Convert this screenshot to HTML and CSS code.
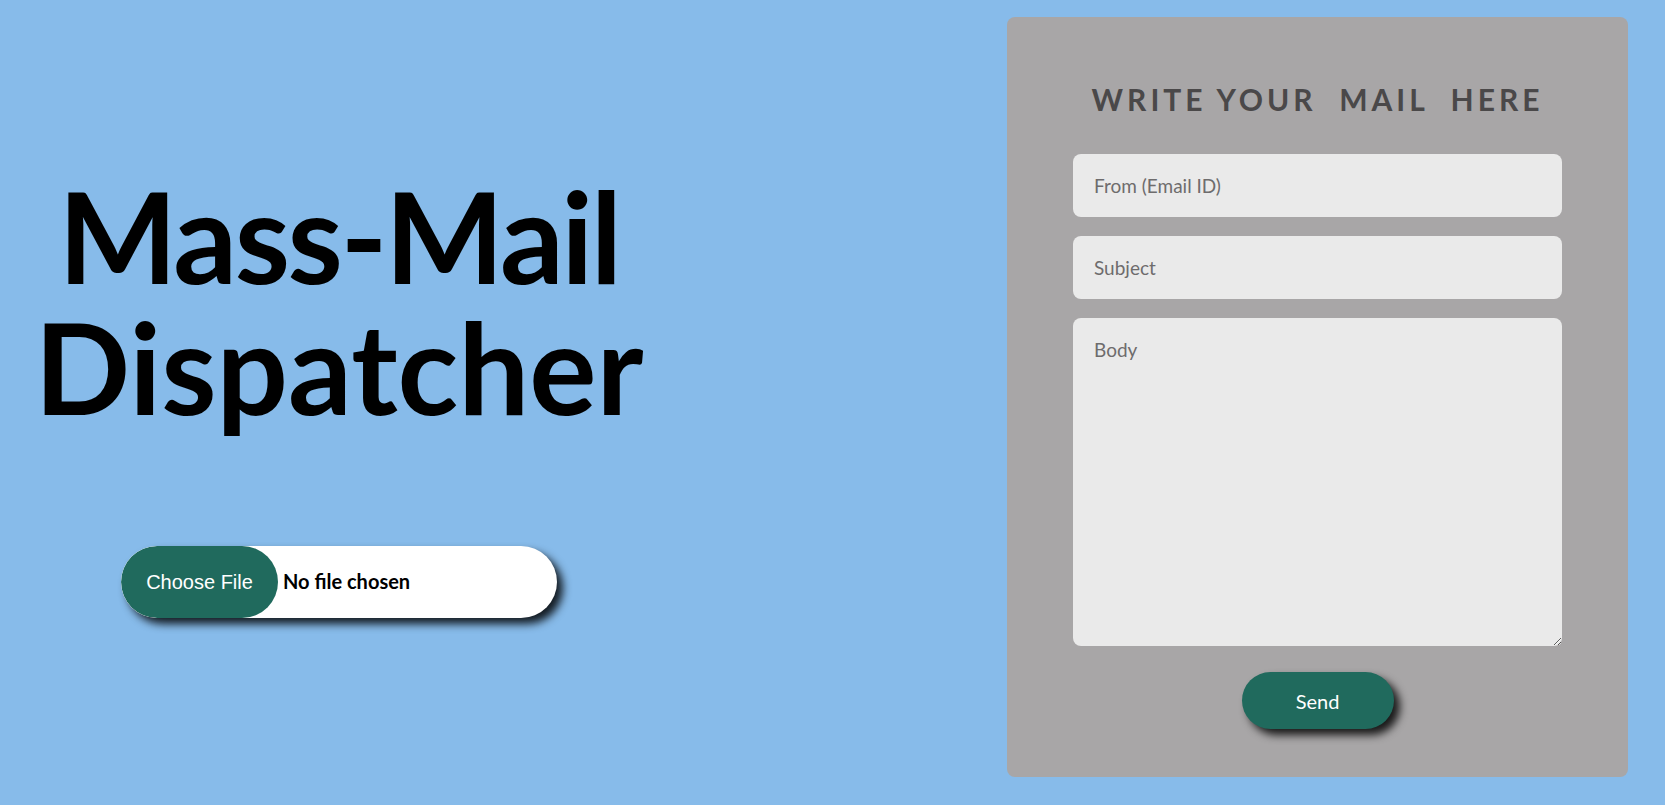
FILE: index.html
```html
<!DOCTYPE html>
<html lang="en">
<head>
<meta charset="utf-8">
<title>Mass-Mail Dispatcher</title>
<link rel="stylesheet" href="styles.css">
</head>
<body>
<main class="page">
  <section class="intro">
    <h1 class="title"><span class="title-line">Mass-Mail</span><span class="title-line">Dispatcher</span></h1>
    <input class="file-input" type="file">
  </section>
  <section class="card">
    <h2 class="card-title">WRITE YOUR&nbsp; MAIL&nbsp; HERE</h2>
    <form class="mail-form">
      <input class="field" type="email" placeholder="From (Email ID)">
      <input class="field" type="text" placeholder="Subject">
      <textarea class="field field-body" placeholder="Body"></textarea>
      <button class="send-btn" type="button">Send</button>
    </form>
  </section>
</main>
</body>
</html>
```
FILE: styles.css
```css
html, body {
  margin: 0;
  padding: 0;
  height: 100%;
}
body {
  background: #87bbea;
  font-family: "Lato", "Open Sans", sans-serif;
  overflow: hidden;
}
.page {
  display: flex;
  align-items: flex-start;
  height: 805px;
}
.intro {
  width: 678px;
  display: flex;
  flex-direction: column;
  align-items: center;
  padding-top: 170px;
}
.title {
  margin: 0;
  display: flex;
  flex-direction: column;
  align-items: center;
  font-size: 126px;
  font-weight: 700;
  color: #000;
}
.title-line {
  display: block;
  line-height: 131px;
  white-space: nowrap;
}
.title-line:first-child {
  letter-spacing: -2.5px;
}
.file-input {
  margin-top: 114px;
  width: 436px;
  height: 72px;
  border-radius: 36px;
  background: #fff;
  box-shadow: 6px 6px 8px rgba(0, 0, 0, 0.85);
  font-family: "Lato", sans-serif;
  font-weight: 700;
  font-size: 20px;
  color: #000;
  padding: 0;
  box-sizing: border-box;
}
.file-input::file-selector-button {
  height: 72px;
  width: 157px;
  border: none;
  border-radius: 36px;
  background: #206a5d;
  color: #fff;
  font-family: "Liberation Sans", Arial, sans-serif;
  font-size: 20px;
  font-weight: 400;
  margin-right: 5px;
  cursor: pointer;
}
.card {
  margin: 17px 37px 0 auto;
  width: 621px;
  height: 760px;
  background: #a8a6a7;
  border-radius: 8px;
  box-sizing: border-box;
  padding-top: 64px;
  display: flex;
  flex-direction: column;
  align-items: center;
}
.card-title {
  margin: 0;
  font-size: 30px;
  line-height: 36px;
  font-weight: 700;
  letter-spacing: 4px;
  color: #4a4849;
}
.mail-form {
  margin-top: 37px;
  width: 489px;
  display: flex;
  flex-direction: column;
  align-items: center;
  gap: 19px;
}
.field {
  width: 100%;
  height: 63px;
  box-sizing: border-box;
  border: none;
  outline: none;
  border-radius: 8px;
  background: #eaeaea;
  padding: 0 21px;
  font-family: "Lato", sans-serif;
  font-size: 19px;
  color: #333;
}
.field::placeholder {
  color: #6e6c6d;
}
.field-body {
  height: 328px;
  padding-top: 20px;
  resize: vertical;
}
.send-btn {
  margin-top: 7px;
  width: 152px;
  height: 57px;
  border: none;
  border-radius: 29px;
  background: #206a5d;
  color: #fff;
  font-family: "Lato", sans-serif;
  font-size: 20px;
  font-weight: 400;
  box-shadow: 6px 6px 8px rgba(0, 0, 0, 0.85);
  cursor: pointer;
}
```
